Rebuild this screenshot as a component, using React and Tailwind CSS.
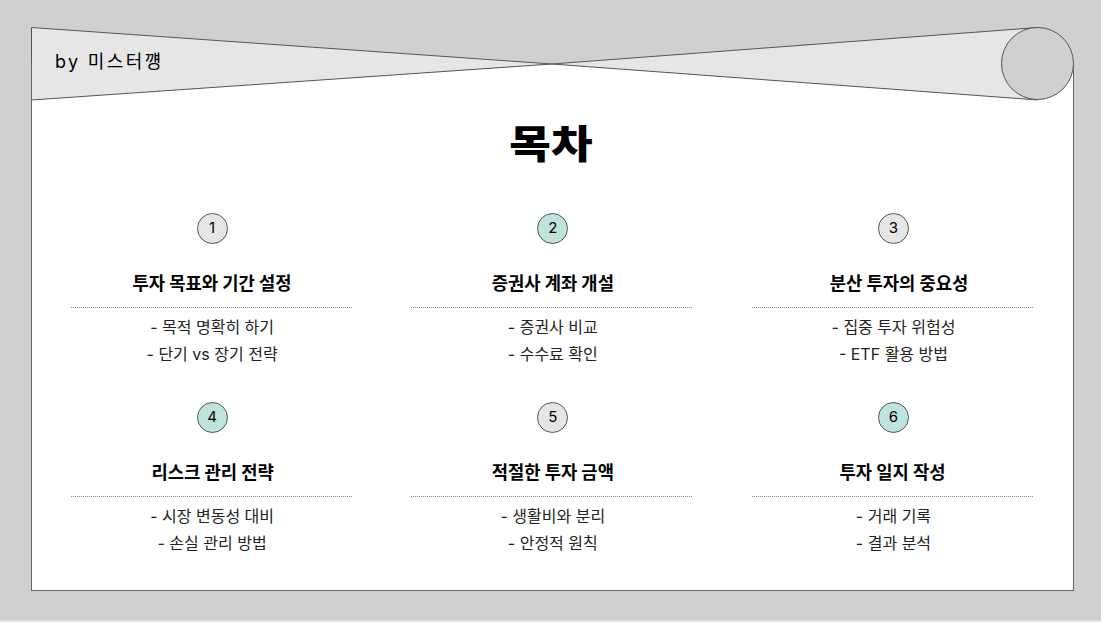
const SANS = "font-['Inter','Noto_Sans_CJK_KR',sans-serif]";

const SECTIONS = [
  { id: 1, title: "투자 목표와 기간 설정", items: ["- 목적 명확히 하기", "- 단기 vs 장기 전략"], accent: false, shift: "ml-[2px]" },
  { id: 2, title: "증권사 계좌 개설", items: ["- 증권사 비교", "- 수수료 확인"], accent: true, shift: "ml-[2px]" },
  { id: 3, title: "분산 투자의 중요성", items: ["- 집중 투자 위험성", "- ETF 활용 방법"], accent: false, shift: "ml-[13px]" },
  { id: 4, title: "리스크 관리 전략", items: ["- 시장 변동성 대비", "- 손실 관리 방법"], accent: true, shift: "ml-[3px]" },
  { id: 5, title: "적절한 투자 금액", items: ["- 생활비와 분리", "- 안정적 원칙"], accent: false, shift: "ml-[2px]" },
  { id: 6, title: "투자 일지 작성", items: ["- 거래 기록", "- 결과 분석"], accent: true, shift: "ml-0" },
];

function Ribbon() {
  return (
    <svg className="block" width="1043" height="74" viewBox="0 0 1043 74">
      <rect width="1043" height="74" fill="#d0d0d0" />
      <polygon points="0,73 521,37 1007,73 1007,37 1043,37 1043,74 0,74" fill="#fff" />
      <polygon points="0.5,0.5 521,37 1007,0.5 1007,73 521,37 0.5,73" fill="#e6e6e6" />
      <path d="M0.5 73 L0.5 0.5 L521 37 L1007 0.5" fill="none" stroke="#555" strokeWidth="1" />
      <path d="M0.5 73 L521 37 L1007 73" fill="none" stroke="#555" strokeWidth="1" />
      <circle cx="1006.5" cy="36.5" r="36" fill="#d0d0d0" stroke="#555" strokeWidth="1" />
    </svg>
  );
}

function Section({ section }) {
  return (
    <div className="flex h-[189px] flex-col items-center">
      <div
        className={`ml-[2px] flex h-[31px] w-[31px] items-center justify-center rounded-full border border-[#555] text-[15px] text-black ${
          section.accent ? "bg-[#bfe3dd]" : "bg-[#e6e6e6]"
        }`}
      >
        {section.id}
      </div>
      <h2 className={`mt-[28px] text-[17.7px] leading-[24px] font-bold text-black ${section.shift}`}>{section.title}</h2>
      <div className="mt-[11px] w-full border-t border-dotted border-[#888]" />
      <ul className="mt-[6px] ml-[2px] text-center text-[16px] leading-[27px] text-[#222]">
        {section.items.map((item) => (
          <li key={item}>{item}</li>
        ))}
      </ul>
    </div>
  );
}

export default function App() {
  return (
    <div className={`h-[622px] w-[1101px] overflow-hidden bg-[#d0d0d0] pt-[27px] ${SANS}`}>
      <div className="relative ml-[31px] h-[564px] w-[1043px] bg-white">
        <div className="pointer-events-none absolute inset-x-0 top-[36px] bottom-0 z-10 border-x border-b border-[#666]" />
        <div className="relative">
          <Ribbon />
          <span className="absolute top-[22px] left-[24px] text-[18px] leading-[26px] tracking-[0.13em] text-black">
            by 미스터꺵
          </span>
        </div>
        <h1 className="mt-[15px] pr-[4px] text-center text-[39px] leading-[56px] font-black text-black">
          <span className="inline-block scale-x-[1.16]">목차</span>
        </h1>
        <div className="mt-[41px] grid grid-cols-[281px_281px_281px] gap-x-[59.7px] pl-[39.6px]">
          {SECTIONS.map((section) => (
            <Section key={section.id} section={section} />
          ))}
        </div>
      </div>
      <div className="mt-[29px] h-[2px] bg-[#e4e4e4]" />
    </div>
  );
}
